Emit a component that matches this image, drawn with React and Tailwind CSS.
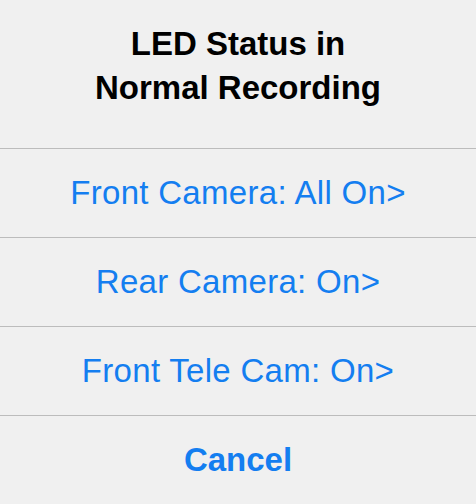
const OPTIONS = [
  "Front Camera: All On>",
  "Rear Camera: On>",
  "Front Tele Cam: On>",
];

export default function App() {
  return (
    <div className="w-[476px] h-[504px] bg-[#f0f0f0] flex flex-col font-['Liberation_Sans',Arial,sans-serif] overflow-hidden">
      <div className="pt-[22px] pb-[38px] text-center text-[33px] leading-[44px] font-bold text-black">
        LED Status in
        <br />
        Normal Recording
      </div>
      {OPTIONS.map((label) => (
        <button
          key={label}
          className="h-[89px] shrink-0 border-t border-[#bcbcbc] flex items-center justify-center text-[33px] tracking-[0.3px] text-[#147ef0]"
        >
          {label}
        </button>
      ))}
      <button className="h-[89px] shrink-0 border-t border-[#bcbcbc] flex items-center justify-center text-[33px] font-bold text-[#147ef0]">
        Cancel
      </button>
    </div>
  );
}
